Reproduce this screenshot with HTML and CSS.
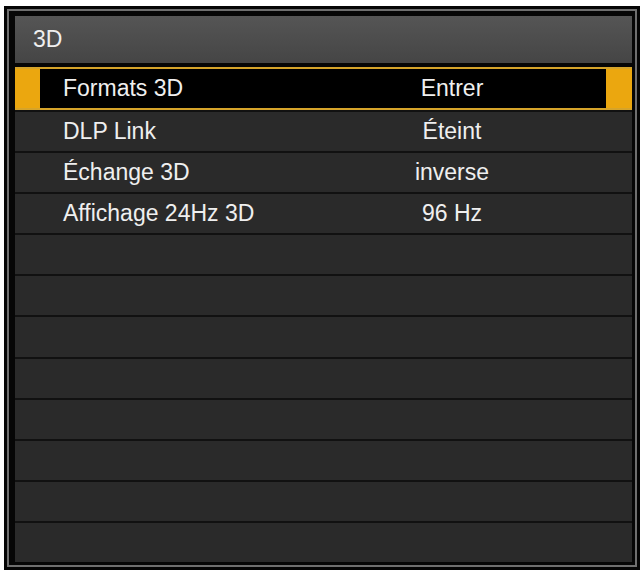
FILE: index.html
```html
<!DOCTYPE html>
<html lang="fr">
<head>
<meta charset="UTF-8">
<meta name="viewport" content="width=device-width, initial-scale=1.0">
<title>3D</title>
<link rel="stylesheet" href="styles.css">
</head>
<body>
<div class="osd">
<div class="osd-frame">
<div class="osd-header">3D</div>
<div class="osd-list">
<div class="osd-row selected">
<span class="osd-label">Formats 3D</span>
<span class="osd-value">Entrer</span>
</div>
<div class="osd-row">
<span class="osd-label">DLP Link</span>
<span class="osd-value">Éteint</span>
</div>
<div class="osd-row">
<span class="osd-label">Échange 3D</span>
<span class="osd-value">inverse</span>
</div>
<div class="osd-row">
<span class="osd-label">Affichage 24Hz 3D</span>
<span class="osd-value">96 Hz</span>
</div>
<div class="osd-row"></div>
<div class="osd-row"></div>
<div class="osd-row"></div>
<div class="osd-row"></div>
<div class="osd-row"></div>
<div class="osd-row"></div>
<div class="osd-row"></div>
<div class="osd-row"></div>
</div>
</div>
</div>
</body>
</html>
```

FILE: styles.css
```css
html,
body {
    margin: 0;
    padding: 0;
    background-color: #fff;
}

body {
    font: 23px/1 "Liberation Sans", Arial, sans-serif;
    color: #efefef;
}

.osd {
    width: 636px;
    height: 564px;
    margin: 6px 0 0 4px;
    box-sizing: border-box;
    border: 3px solid #050505;
    background: #6f6f6f;
}

.osd-frame {
    height: 100%;
    box-sizing: border-box;
    margin: 2px;
    height: calc(100% - 4px);
    padding: 5px 3px 3px 6px;
    background: #060606;
    display: flex;
    flex-direction: column;
}

.osd-header {
    height: 47px;
    margin-bottom: 4px;
    padding-left: 18px;
    display: flex;
    align-items: center;
    background: linear-gradient(#555, #454545);
    flex-shrink: 0;
}

.osd-list {
    flex: 1;
    display: flex;
    flex-direction: column;
}

.osd-row {
    flex: 1;
    display: grid;
    grid-template-columns: 322px 230px 1fr;
    align-items: center;
    background: #2a2a2a;
    border-top: 2px solid #111;
}

.osd-row.selected {
    flex: 0 0 43px;
    box-sizing: border-box;
    border-top: 2px solid #d6a42a;
    border-bottom: 2px solid #d6a42a;
    background: linear-gradient(to right,
        #eba70f 25px, #000 25px,
        #000 calc(100% - 26px), #eba70f calc(100% - 26px));
}

.osd-label {
    padding-left: 48px;
    white-space: nowrap;
}

.osd-value {
    text-align: center;
    white-space: nowrap;
}
```
